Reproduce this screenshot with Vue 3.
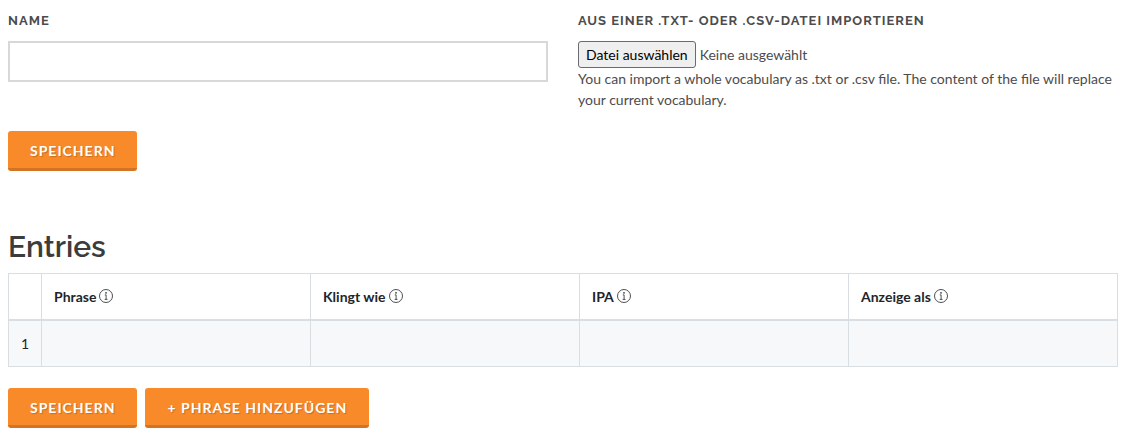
<script setup>
import { ref } from 'vue'

const name = ref('')
const fileName = ref('')
const columns = ['Phrase', 'Klingt wie', 'IPA', 'Anzeige als']
const entries = ref([{ id: 1 }])

function pickFile(event) {
  const file = event.target.files[0]
  fileName.value = file ? file.name : ''
}

function addEntry() {
  entries.value.push({ id: entries.value.length + 1 })
}
</script>

<template>
  <main class="page">
    <form class="form" @submit.prevent>
      <div class="fields">
        <div class="field">
          <label class="caption" for="vocabulary-name">Name</label>
          <input id="vocabulary-name" v-model="name" class="text-input" type="text" />
        </div>
        <div class="field">
          <label class="caption" for="vocabulary-file">Aus einer .txt- oder .csv-Datei importieren</label>
          <div class="file">
            <input id="vocabulary-file" class="file-input" type="file" accept=".txt,.csv" @change="pickFile" />
            <label class="file-button" for="vocabulary-file">Datei auswählen</label>
            <span>{{ fileName || 'Keine ausgewählt' }}</span>
          </div>
          <p class="help">
            You can import a whole vocabulary as .txt or .csv file. The content of the file will replace your current
            vocabulary.
          </p>
        </div>
      </div>
      <button class="button" type="submit">Speichern</button>
    </form>

    <h2 class="heading">Entries</h2>
    <table class="entries">
      <thead>
        <tr>
          <th class="number"></th>
          <th v-for="column in columns" :key="column" scope="col">
            <span class="column-title">
              {{ column }}
              <svg class="info" viewBox="0 0 14 14" aria-hidden="true">
                <circle cx="7" cy="7" r="6.5" fill="none" stroke="currentColor" stroke-width="0.8" />
                <circle cx="7" cy="3.9" r="0.8" fill="currentColor" />
                <path d="M5.8 5.9H7.1V10.3M5.7 10.4H8.5" fill="none" stroke="currentColor" stroke-width="0.8" />
              </svg>
            </span>
          </th>
        </tr>
      </thead>
      <tbody>
        <tr v-for="entry in entries" :key="entry.id">
          <td class="number">{{ entry.id }}</td>
          <td v-for="column in columns" :key="column"></td>
        </tr>
      </tbody>
    </table>

    <div class="actions">
      <button class="button" type="button">Speichern</button>
      <button class="button" type="button" @click="addEntry">+ Phrase hinzufügen</button>
    </div>
  </main>
</template>

<style>
body {
  margin: 0;
  background: #fff;
}
</style>

<style scoped>
.page {
  box-sizing: border-box;
  padding: 10px 11px 11px 8px;
  font-family: Lato, sans-serif;
  font-size: 14px;
  line-height: 21px;
  color: #4c4c4c;
}

.fields {
  display: grid;
  grid-template-columns: 1fr 1fr;
  gap: 30px;
  margin-bottom: 21px;
}

.caption {
  display: block;
  margin-bottom: 10px;
  font-family: Raleway, Lato, sans-serif;
  font-size: 13px;
  font-weight: 700;
  letter-spacing: 1px;
  text-transform: uppercase;
}

.text-input {
  display: block;
  box-sizing: border-box;
  width: 100%;
  height: 41px;
  padding: 8px 14px;
  border: 2px solid #d8d8d8;
  border-radius: 0;
  font: inherit;
}

.file {
  display: flex;
  align-items: center;
  gap: 4px;
}

.file-input {
  position: absolute;
  width: 1px;
  height: 1px;
  opacity: 0;
}

.file-button {
  padding: 2px 7px;
  border: 1px solid #6b6b6b;
  border-radius: 3px;
  background: #efefef;
  line-height: 21px;
  color: #000;
}

.file-input:focus-visible + .file-button {
  outline: 2px solid #2b6cb0;
}

.help {
  margin: 0;
}

.button {
  height: 40px;
  padding: 2px 22px 0;
  border: 0;
  border-bottom: 3px solid #d27423;
  border-radius: 3px;
  background: #f88a29;
  color: #fff;
  font-family: inherit;
  font-size: 14px;
  font-weight: 700;
  letter-spacing: 1px;
  text-transform: uppercase;
  text-shadow: 1px 1px 1px rgba(0, 0, 0, 0.2);
  cursor: pointer;
}

.heading {
  margin: 58px 0 8px;
  font-family: Raleway, Lato, sans-serif;
  font-size: 30px;
  font-weight: 600;
  line-height: 36px;
  color: #3c3c3c;
}

.entries {
  width: 100%;
  border-collapse: collapse;
  table-layout: fixed;
  color: #212529;
}

.entries th,
.entries td {
  box-sizing: border-box;
  height: 47px;
  padding: 12px;
  border: 1px solid #d9dee2;
  text-align: left;
}

.entries thead th {
  height: 46px;
  padding: 11px 12px;
  border-bottom-width: 2px;
}

.entries tbody tr:nth-child(odd) {
  background: #f6f8fa;
}

.entries .number {
  width: 33px;
  padding: 12px 0;
  text-align: center;
}

.entries thead .number {
  padding: 11px 0;
}

.column-title {
  display: flex;
  align-items: center;
  gap: 3px;
}

.info {
  width: 14px;
  height: 14px;
}

.actions {
  display: flex;
  flex-wrap: wrap;
  gap: 8px;
  margin-top: 21px;
}
</style>
